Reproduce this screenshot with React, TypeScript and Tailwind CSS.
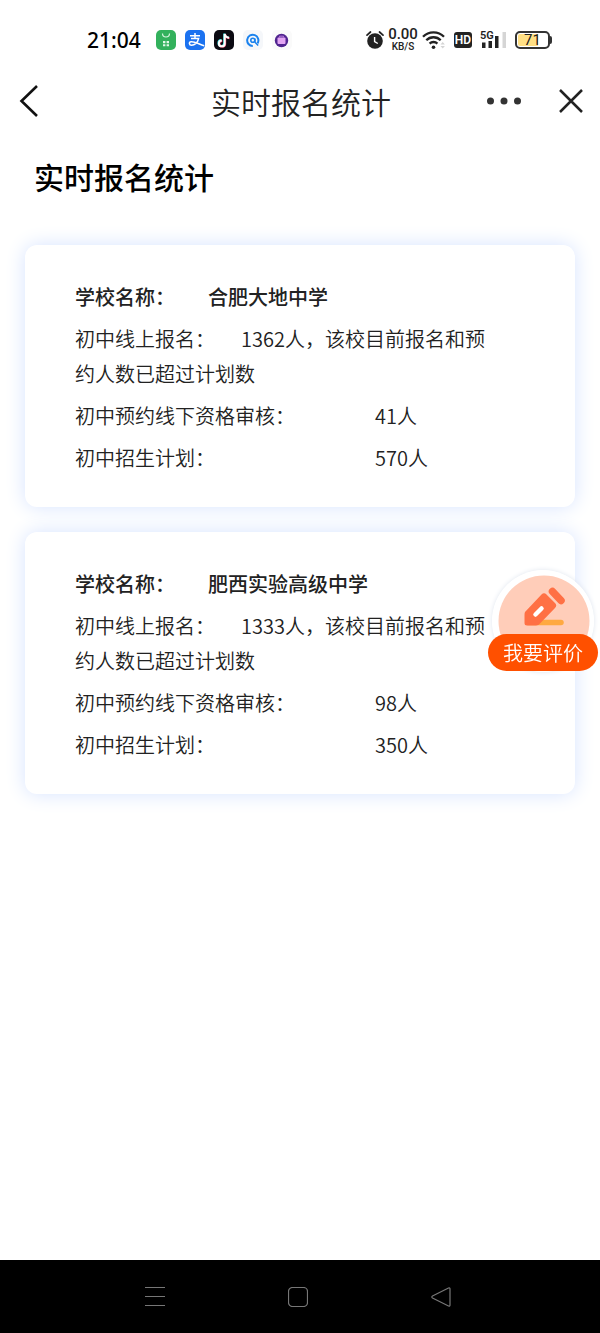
// School registration stats page - header, school cards, feedback button
interface School {
  name: string
  online: string
  offline: string
  plan: string
}

const schools: School[] = [
  { name: '合肥大地中学', online: '1362人，该校目前报名和预约人数已超过计划数', offline: '41人', plan: '570人' },
  { name: '肥西实验高级中学', online: '1333人，该校目前报名和预约人数已超过计划数', offline: '98人', plan: '350人' },
]

// running app icons next to the clock
function AppIcons() {
  return (
    <div className="flex items-center gap-[9px]">
      <svg className="h-5 w-5" viewBox="0 0 20 20">
        <rect width="20" height="20" rx="5" fill="#33b15c" />
        <path d="M6.5 3.5a3.5 3.5 0 0 0 7 0" fill="none" stroke="#d8f5df" strokeWidth="1.2" />
        <path d="M7 11h2.4v2.2H7zM10.6 11H13v2.2h-2.4zM7 14.2h2.4v2H7zM10.6 14.2H13v2h-2.4z" fill="#e2f8e7" />
      </svg>
      <svg className="h-5 w-5" viewBox="0 0 20 20">
        <rect width="20" height="20" rx="5" fill="#1b72f0" />
        <path
          d="M5 5.8h10M10 3v5.4M6 8.6h7.6c-.8 3.8-4 6.7-7 6.7-2.7 0-3-3.2-.4-3.5 3-.4 7 2 13 4"
          fill="none"
          stroke="#fff"
          strokeWidth="1.5"
        />
      </svg>
      <svg className="h-5 w-5" viewBox="0 0 20 20">
        <rect width="20" height="20" rx="5" fill="#0b0a12" />
        <g fill="none" strokeWidth="2">
          <path d="M10.2 3.5v9.5a2.9 2.9 0 1 1-2.9-2.9M10.2 3.5c.4 2.4 2 3.7 4.4 3.9" stroke="#3cdfe2" />
          <path d="M11.2 4.3v9.5a2.9 2.9 0 1 1-2.9-2.9M11.2 4.3c.4 2.4 2 3.7 4.4 3.9" stroke="#ee4468" />
          <path d="M10.7 3.9v9.5a2.9 2.9 0 1 1-2.9-2.9M10.7 3.9c.4 2.4 2 3.7 4.4 3.9" stroke="#fff" />
        </g>
      </svg>
      <svg className="h-5 w-5" viewBox="0 0 20 20">
        <rect width="20" height="20" rx="5" fill="#f5f7fa" />
        <path d="M9.8 16a5.6 5.6 0 1 1 4.7-2.6" fill="none" stroke="#1a82ee" strokeWidth="2" />
        <circle cx="9.8" cy="10.3" r="2" fill="none" stroke="#1a82ee" strokeWidth="1.6" />
        <path d="M12 8.5v3.7l3.2 3.3" fill="none" stroke="#1a82ee" strokeWidth="1.5" />
      </svg>
      <svg className="h-5 w-5" viewBox="0 0 20 20">
        <rect width="20" height="20" rx="5" fill="#fafafa" />
        <circle cx="9.5" cy="10.5" r="6.7" fill="#50248f" />
        <rect x="5.5" y="7.5" width="8" height="6.4" rx="1" fill="#e3a5f3" />
        <path d="M7.5 7.500V6.200h4v1.300" fill="none" stroke="#b779dc" />
      </svg>
    </div>
  )
}

function StatusBar() {
  return (
    <div className="flex h-[72px] items-center justify-between pt-2 pr-12 pl-[87px] text-[#222]">
      <div className="flex items-center gap-[15px]">
        <span className="font-['Noto_Sans'] text-[21px] leading-6 font-medium text-black">21:04</span>
        <AppIcons />
      </div>

      <div className="flex items-center">
        <svg className="h-5 w-[18px]" viewBox="0 0 18 20">
          <circle cx="9" cy="11" r="7.8" fill="#222" />
          <path d="M1 5.2 4.5 2M17 5.2 13.5 2" stroke="#222" strokeWidth="1.7" strokeLinecap="round" />
          <path d="M8.6 7v4.5l3.2 2" fill="none" stroke="#fff" strokeWidth="1.4" />
        </svg>
        <div className="ml-1 w-[30px] text-center font-[Roboto] font-medium">
          <div className="text-[15px] leading-[13px]">0.00</div>
          <div className="text-[10px] leading-[11px]">KB/S</div>
        </div>
        <svg className="ml-1 h-5 w-6" viewBox="0 0 24 20">
          <g fill="none" stroke="#222" strokeWidth="2.3">
            <path d="M1 6.8a14.5 14.5 0 0 1 21 0" />
            <path d="M4.3 10.3a10 10 0 0 1 14.4 0" />
            <path d="M7.6 13.6a5.5 5.5 0 0 1 7.8 0" />
          </g>
          <circle cx="11.5" cy="17.2" r="1.8" fill="#222" />
          <path d="m18.5 14.5 2.2-2.5 2.2 2.5zM18.5 16l2.2 2.5 2.2-2.5z" fill="#d4d4d4" />
        </svg>
        <span className="ml-2 flex h-4 w-[18px] items-center justify-center rounded-[3px] bg-[#222] font-[Roboto] text-[12px] font-semibold text-white">
          HD
        </span>
        <svg className="ml-2 h-5 w-[27px]" viewBox="0 0 27 20">
          <text x="0" y="9" fontFamily="Roboto" fontWeight="600" fontSize="11" fill="#222">5G</text>
          <path d="M2 12.5h3.500V18H2zM8.500 11H12v7H8.500zM15 6h3.500v12H15z" fill="#222" />
          <path d="M22.500 2H26v16h-3.500z" fill="#d5d5d5" />
        </svg>
        <div className="ml-2 flex items-center">
          <span className="flex h-[18px] w-[35px] rounded-[5px] border-2 border-[#333] bg-white p-px">
            <span className="flex h-full w-full items-center justify-center rounded-[2px] bg-linear-to-r from-[#ffdf84] from-70% to-white to-70% font-[Roboto] text-[15px] leading-3">
              71
            </span>
          </span>
          <span className="h-2 w-0.5 rounded-r bg-[#333]" />
        </div>
      </div>
    </div>
  )
}

function TitleBar() {
  return (
    <header className="grid h-[58px] grid-cols-[1fr_auto_1fr] items-center pr-4 pl-[18px]">
      <button type="button" aria-label="返回" className="justify-self-start">
        <svg className="h-8 w-5" viewBox="0 0 20 32">
          <path d="M19 1 3.500 16 19 31" fill="none" stroke="#111" strokeWidth="2.6" />
        </svg>
      </button>
      <span className="text-[30px] leading-9 font-[350] text-[#222]">实时报名统计</span>
      <div className="flex items-center gap-9 justify-self-end">
        <button type="button" aria-label="更多">
          <svg className="h-8 w-9" viewBox="0 0 36 32">
            <g fill="#333">
              <circle cx="4.5" cy="16" r="3.5" />
              <circle cx="18" cy="16" r="3.5" />
              <circle cx="31.5" cy="16" r="3.5" />
            </g>
          </svg>
        </button>
        <button type="button" aria-label="关闭">
          <svg className="h-7 w-[26px]" viewBox="0 0 26 28">
            <path d="m2 3 22 22M24 3 2 25" stroke="#222" strokeWidth="2.5" />
          </svg>
        </button>
      </div>
    </header>
  )
}

function SchoolCard({ school }: { school: School }) {
  return (
    <section className="flex flex-col gap-[7px] rounded-xl bg-white pt-[34px] pr-[75px] pb-8 pl-[50px] text-[20px] leading-[35px] font-[350] text-[#222] shadow-[0_0_20px_#d6e3ff]">
      <h2 className="font-medium">
        <span className="inline-block min-w-[133px]">学校名称：</span>
        {school.name}
      </h2>
      <p>
        <span className="inline-block min-w-[166px]">初中线上报名：</span>
        {school.online}
      </p>
      <p>
        <span className="inline-block min-w-[300px]">初中预约线下资格审核：</span>
        {school.offline}
      </p>
      <p>
        <span className="inline-block min-w-[300px]">初中招生计划：</span>
        {school.plan}
      </p>
    </section>
  )
}

// floating feedback button, stays over the cards
function FeedbackButton() {
  return (
    <button type="button" className="fixed top-[570px] right-0.5 flex w-[110px] flex-col items-center">
      <svg className="h-[102px] w-[102px] rounded-full shadow-[0_0_5px_#dfe5ee]" viewBox="0 0 102 102">
        <circle cx="51" cy="51" r="51" fill="#fff" />
        <circle cx="52" cy="51" r="45.5" fill="#ffcdb9" />
        <path d="M36 52.5h33" stroke="#ffa941" strokeWidth="5.5" strokeLinecap="round" />
        <path
          d="M33 42 49.5 24.500q2.500-2.500 5 0l8.500 8.500q2.500 2.500 0 5L48 53.500q-1.500 2-4 2H35q-2.500 0-2.500-2.500v-8q0-2 .5-3z"
          fill="#ff7044"
        />
        <path d="m60.500 21.500 8.500 9" stroke="#ff7044" strokeWidth="7.5" strokeLinecap="round" />
        <path d="m43.500 44.500 6-6" stroke="#fff" strokeWidth="4.5" strokeLinecap="round" />
      </svg>
      <span className="-mt-[38px] w-full rounded-full bg-[#ff5000] text-center text-[20px] leading-[37px] font-[350] text-white">
        我要评价
      </span>
    </button>
  )
}

function SystemNav() {
  return (
    <nav className="grid h-[73px] grid-cols-3 place-items-center bg-black pr-[88px] pl-[84px]">
      <button type="button" aria-label="菜单">
        <svg className="h-5 w-5" viewBox="0 0 20 20">
          <path d="M0 .5h20M0 9.5h20M0 18.5h20" stroke="#777" />
        </svg>
      </button>
      <button type="button" aria-label="主页">
        <svg className="h-5 w-5" viewBox="0 0 20 20">
          <rect x=".5" y=".5" width="19" height="19" rx="4" fill="none" stroke="#777" strokeWidth="1.2" />
        </svg>
      </button>
      <button type="button" aria-label="后退">
        <svg className="h-5 w-5" viewBox="0 0 20 20">
          <path
            d="M17.5 1 1.5 9q-1.4 1 0 2l16 8q1.5.5 1.5-1V2q0-1.5-1.5-1z"
            fill="none"
            stroke="#777"
            strokeWidth="1.2"
          />
        </svg>
      </button>
    </nav>
  )
}

export default function App() {
  return (
    <div lang="zh-CN" className="flex min-h-screen flex-col bg-white font-['Noto_Sans_CJK_SC',sans-serif]">
      <StatusBar />
      <TitleBar />
      <main className="flex-1 px-[25px] pb-8">
        <h1 className="pt-7 pl-[9px] text-[30px] leading-9 font-medium text-black">实时报名统计</h1>
        <div className="mt-[51px] flex flex-col gap-[25px]">
          {schools.map((school) => (
            <SchoolCard key={school.name} school={school} />
          ))}
        </div>
      </main>
      <FeedbackButton />
      <SystemNav />
    </div>
  )
}
